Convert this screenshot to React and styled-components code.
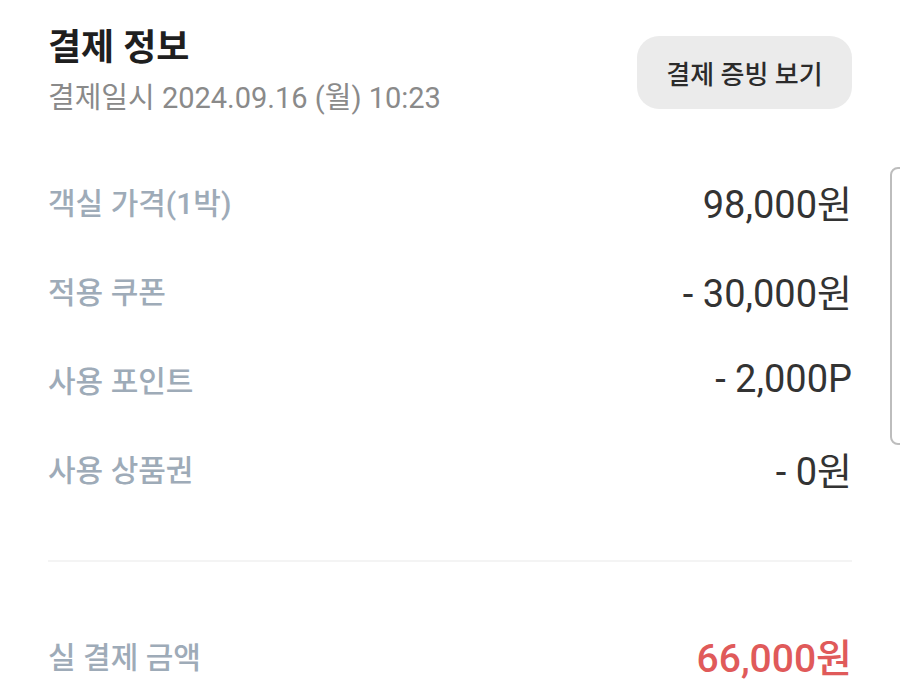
import React from 'react';
import styled, { createGlobalStyle } from 'styled-components';

const GlobalStyle = createGlobalStyle`
  html, body {
    margin: 0;
    padding: 0;
    background: #ffffff;
  }
  body {
    font-family: Roboto, "Noto Sans CJK KR", sans-serif;
    overflow: hidden;
  }
`;

const rows = [
  { id: 1, label: '객실 가격(1박)', value: '98,000원' },
  { id: 2, label: '적용 쿠폰', value: '- 30,000원' },
  { id: 3, label: '사용 포인트', value: '- 2,000P' },
  { id: 4, label: '사용 상품권', value: '- 0원' },
];

const App = () => {
  return (
    <>
      <GlobalStyle />
      <Wrap>
        <Header>
          <div>
            <Title>결제 정보</Title>
            <PaidAt>결제일시 2024.09.16 (월) 10:23</PaidAt>
          </div>
          <ReceiptButton type="button">결제 증빙 보기</ReceiptButton>
        </Header>
        <List>
          {rows.map((item) => (
            <Row key={item.id}>
              <Label>{item.label}</Label>
              <Value>{item.value}</Value>
            </Row>
          ))}
        </List>
        <Divider />
        <Total>
          <Label>실 결제 금액</Label>
          <TotalValue>66,000원</TotalValue>
        </Total>
        <PeekCard />
      </Wrap>
    </>
  );
};

export default App;

const Wrap = styled.div`
  position: relative;
  width: 900px;
  height: 695px;
  box-sizing: border-box;
  padding: 24px 48px 0;
`;

const Header = styled.div`
  display: flex;
  justify-content: space-between;
  align-items: flex-start;
`;

const Title = styled.h1`
  margin: 0;
  color: #1f1f1f;
  font-size: 36px;
  font-weight: 700;
  line-height: 48px;
`;

const PaidAt = styled.p`
  margin: 6px 0 0;
  color: #8a8a8a;
  font-size: 29px;
  font-weight: 400;
  line-height: 40px;
`;

const ReceiptButton = styled.button`
  margin-top: 12px;
  width: 215px;
  height: 73px;
  border: none;
  border-radius: 22px;
  background: #ebebeb;
  color: #2b2b2b;
  font-family: inherit;
  font-size: 26px;
  font-weight: 500;
  cursor: pointer;
`;

const List = styled.ul`
  list-style: none;
  margin: 58px 0 0;
  padding: 0;
  display: flex;
  flex-direction: column;
  gap: 39px;
`;

const Row = styled.li`
  display: flex;
  justify-content: space-between;
  align-items: center;
  height: 50px;
`;

const Label = styled.span`
  color: #9eabb8;
  font-size: 30px;
  font-weight: 500;
`;

const Value = styled.span`
  color: #333333;
  font-size: 38px;
  font-weight: 400;
`;

const Divider = styled.hr`
  margin: 67px 0 0;
  border: none;
  height: 2px;
  background: #f4f4f4;
`;

const Total = styled.div`
  margin-top: 68px;
  display: flex;
  justify-content: space-between;
  align-items: center;
  height: 50px;
`;

const TotalValue = styled.span`
  color: #e05a5a;
  font-size: 39px;
  font-weight: 500;
`;

const PeekCard = styled.div`
  position: absolute;
  top: 167px;
  left: 890px;
  width: 40px;
  height: 278px;
  border: 2px solid #bdbdbd;
  border-radius: 8px;
  box-sizing: border-box;
`;
